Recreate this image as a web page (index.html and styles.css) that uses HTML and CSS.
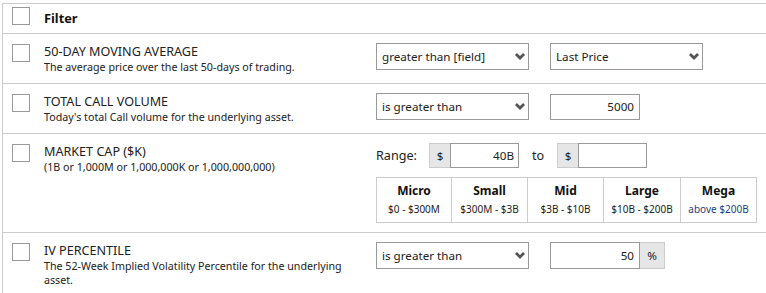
FILE: index.html
```html
<!DOCTYPE html>
<html>
<head>
<meta charset="utf-8">
<link rel="stylesheet" href="styles.css">
</head>
<body>
<div class="frame">
  <div class="table">
    <div class="row head">
      <div class="cb-cell"><span class="cb"></span></div>
      <div class="name"><span class="head-title">Filter</span></div>
      <div class="ctrl"></div>
    </div>

    <div class="row">
      <div class="cb-cell"><span class="cb"></span></div>
      <div class="name">
        <div class="title">50-DAY MOVING AVERAGE</div>
        <div class="desc">The average price over the last 50-days of trading.</div>
      </div>
      <div class="ctrl">
        <div class="line">
          <div class="select"><span>greater than [field]</span><svg class="chev" viewBox="0 0 10 7"><path d="M0 1.9 L1.9 0 L5 3.1 L8.1 0 L10 1.9 L5 6.9 Z"/></svg></div>
          <div class="select"><span>Last Price</span><svg class="chev" viewBox="0 0 10 7"><path d="M0 1.9 L1.9 0 L5 3.1 L8.1 0 L10 1.9 L5 6.9 Z"/></svg></div>
        </div>
      </div>
    </div>

    <div class="row">
      <div class="cb-cell"><span class="cb"></span></div>
      <div class="name">
        <div class="title">TOTAL CALL VOLUME</div>
        <div class="desc">Today's total Call volume for the underlying asset.</div>
      </div>
      <div class="ctrl">
        <div class="line">
          <div class="select"><span>is greater than</span><svg class="chev" viewBox="0 0 10 7"><path d="M0 1.9 L1.9 0 L5 3.1 L8.1 0 L10 1.9 L5 6.9 Z"/></svg></div>
          <div class="input">5000</div>
        </div>
      </div>
    </div>

    <div class="row">
      <div class="cb-cell"><span class="cb"></span></div>
      <div class="name">
        <div class="title">MARKET CAP ($K)</div>
        <div class="desc">(1B or 1,000M or 1,000,000K or 1,000,000,000)</div>
      </div>
      <div class="ctrl">
        <div class="range">
          <span class="range-label">Range:</span>
          <div class="group"><span class="addon">$</span><span class="ginput">40B</span></div>
          <span class="to">to</span>
          <div class="group"><span class="addon">$</span><span class="ginput"></span></div>
        </div>
        <div class="caps">
          <div class="cap"><div class="cap-name">Micro</div><div class="cap-range">$0 - $300M</div></div>
          <div class="cap"><div class="cap-name">Small</div><div class="cap-range">$300M - $3B</div></div>
          <div class="cap"><div class="cap-name">Mid</div><div class="cap-range">$3B - $10B</div></div>
          <div class="cap"><div class="cap-name">Large</div><div class="cap-range">$10B - $200B</div></div>
          <div class="cap"><div class="cap-name">Mega</div><div class="cap-range blue">above $200B</div></div>
        </div>
      </div>
    </div>

    <div class="row last">
      <div class="cb-cell"><span class="cb"></span></div>
      <div class="name">
        <div class="title">IV PERCENTILE</div>
        <div class="desc">The 52-Week Implied Volatility Percentile for the underlying asset.</div>
      </div>
      <div class="ctrl">
        <div class="line">
          <div class="select"><span>is greater than</span><svg class="chev" viewBox="0 0 10 7"><path d="M0 1.9 L1.9 0 L5 3.1 L8.1 0 L10 1.9 L5 6.9 Z"/></svg></div>
          <div class="group"><span class="input pct-input">50</span><span class="addon pct">%</span></div>
        </div>
      </div>
    </div>
  </div>
</div>
</body>
</html>
```

FILE: styles.css
```css
* { box-sizing: border-box; }
html, body { margin: 0; padding: 0; background: #fff; }
body {
  font-family: "Noto Sans", "Open Sans", sans-serif;
  color: #222;
  width: 766px;
  height: 293px;
  overflow: hidden;
}
.frame {
  padding: 3px 0 0 2px;
}
.table {
  width: 800px;
  border-left: 1px solid #ccc;
  border-top: 1px solid #ccc;
}
.row {
  display: grid;
  grid-template-columns: 41px 332px 1fr;
  border-bottom: 1px solid #ccc;
  padding: 9px 0 9px 0;
}
.row.head {
  padding: 2px 0 5px 0;
}
.row.last { border-bottom: none; }
.cb-cell {
  padding-left: 9px;
  padding-top: 1px;
}
.cb {
  display: block;
  width: 18px;
  height: 18px;
  border: 1px solid #9a9a9a;
  background: #fff;
}
.head-title {
  font-weight: bold;
  font-size: 12.8px;
  line-height: 20px;
  color: #111;
}
.title {
  font-size: 12.6px;
  line-height: 17px;
  color: #222;
}
.desc {
  font-size: 10.7px;
  line-height: 14px;
  color: #222;
  padding-right: 12px;
}
.ctrl {
  display: flex;
  flex-direction: column;
}
.line {
  display: flex;
  gap: 21px;
  align-items: center;
}
.select {
  width: 153px;
  height: 27px;
  border: 1px solid #9a9a9a;
  display: flex;
  align-items: center;
  justify-content: space-between;
  padding: 0 3px 0 5px;
  font-size: 11.65px;
  color: #222;
}
.chev {
  width: 10px;
  height: 7px;
  fill: #555;
}
.input {
  width: 90px;
  height: 26px;
  border: 1px solid #9a9a9a;
  font-size: 11.65px;
  display: flex;
  align-items: center;
  justify-content: flex-end;
  padding-right: 5px;
}
.group {
  display: flex;
  height: 25px;
}
.addon {
  width: 21px;
  background: #e6e6e6;
  border: 1px solid #ccc;
  border-right: none;
  display: flex;
  align-items: center;
  justify-content: center;
  font-size: 11.65px;
  color: #222;
}
.ginput {
  width: 69px;
  border: 1px solid #9a9a9a;
  display: flex;
  align-items: center;
  justify-content: flex-end;
  padding-right: 4px;
  font-size: 11.65px;
}
.pct-input {
  height: 27px;
}
.addon.pct {
  width: 25px;
  height: 27px;
  border: 1px solid #ccc;
  border-left: none;
}
.row.last .group { height: 27px; }
.range {
  display: flex;
  align-items: center;
  height: 25px;
}
.range-label {
  font-size: 12.6px;
  width: 53px;
}
.to {
  font-size: 12.6px;
  width: 38px;
  padding-left: 13px;
}
.caps {
  margin-top: 9px;
  width: 381px;
  display: grid;
  grid-template-columns: 75px 76px 76px 77px 1fr;
  border: 1px solid #ccc;
}
.cap {
  border-right: 1px solid #ccc;
  text-align: center;
  height: 44px;
  padding-top: 4px;
}
.cap:last-child { border-right: none; }
.cap-name {
  font-weight: bold;
  font-size: 12px;
  line-height: 17px;
  color: #111;
}
.cap-range {
  font-size: 10px;
  line-height: 14px;
  margin-top: 3px;
  color: #222;
}
.cap-range.blue { color: #1d3f80; }
```
